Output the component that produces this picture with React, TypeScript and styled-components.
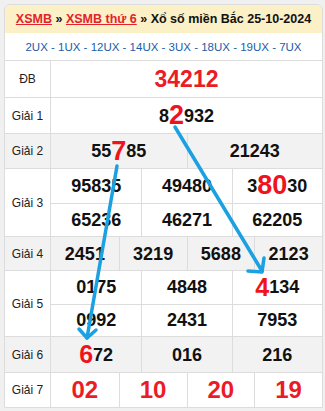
import React from "react";
import styled, { createGlobalStyle } from "styled-components";

const GlobalStyle = createGlobalStyle`
  html, body { margin: 0; padding: 0; background: #f0f0f0; }
  body { font-family: "Liberation Sans", Arial, sans-serif; }
  *, *::before, *::after { box-sizing: border-box; }
`;

const Page = styled.div`
  position: relative;
  width: 325px;
  height: 411px;
  padding: 4px 2px 0 4px;
`;

const Board = styled.div`
  border: 1px solid #dcdcdc;
  border-radius: 6px 6px 0 0;
  overflow: hidden;
  background: #fff;
`;

const Header = styled.div`
  height: 28px;
  background: #fcf0c6;
  display: flex;
  align-items: center;
  justify-content: center;
  font-weight: bold;
  font-size: 12.5px;
  color: #111;
  white-space: pre;
`;

const Crumb = styled.a`
  color: #e3232c;
  text-decoration: underline;
`;

const Links = styled.div`
  height: 27px;
  display: flex;
  align-items: center;
  justify-content: center;
  font-size: 11.5px;
  color: #1c5ca8;
  white-space: pre;
`;

const Row = styled.div<{ $shade?: boolean; $h: number }>`
  display: grid;
  grid-template-columns: 46px 1fr;
  border-top: 1px solid #dcdcdc;
  height: ${(p) => p.$h}px;
  background: ${(p) => (p.$shade ? "#f2f2f2" : "#fff")};
`;

const Label = styled.div`
  border-right: 1px solid #dcdcdc;
  display: flex;
  align-items: center;
  justify-content: center;
  font-size: 12px;
  color: #222;
`;

const Numbers = styled.div<{ $cols: number; $rows: number }>`
  display: grid;
  grid-template-columns: repeat(${(p) => p.$cols}, 1fr);
  grid-template-rows: repeat(${(p) => p.$rows}, 1fr);
`;

const Cell = styled.div<{ $left: boolean; $top: boolean; $size: number; $red?: boolean }>`
  display: flex;
  align-items: center;
  justify-content: center;
  border-left: ${(p) => (p.$left ? "1px solid #dcdcdc" : "none")};
  border-top: ${(p) => (p.$top ? "1px solid #dcdcdc" : "none")};
  font-weight: bold;
  font-size: ${(p) => p.$size}px;
  line-height: 1;
  color: ${(p) => (p.$red ? "#ec1c26" : "#111")};
`;

const Hot = styled.span<{ $size: number }>`
  color: #f0121c;
  font-size: ${(p) => p.$size}px;
`;

const Overlay = styled.svg`
  position: absolute;
  top: 0;
  left: 0;
  pointer-events: none;
`;

type Prize = {
  label: string;
  cols: number;
  nums: string[];
  h: number;
  shade?: boolean;
  size?: number;
  red?: boolean;
  hot?: number;
};

const prizes: Prize[] = [
  { label: "ĐB", cols: 1, nums: ["34212"], h: 37, size: 23, red: true },
  { label: "Giải 1", cols: 1, nums: ["8{2}932"], h: 36, hot: 27 },
  { label: "Giải 2", cols: 2, nums: ["55{7}85", "21243"], h: 35, shade: true, hot: 27 },
  {
    label: "Giải 3",
    cols: 3,
    nums: ["95835", "49480", "3{80}30", "65236", "46271", "62205"],
    h: 68,
    hot: 27,
  },
  { label: "Giải 4", cols: 4, nums: ["2451", "3219", "5688", "2123"], h: 34, shade: true },
  {
    label: "Giải 5",
    cols: 3,
    nums: ["0175", "4848", "{4}134", "0992", "2431", "7953"],
    h: 66,
    hot: 25,
  },
  { label: "Giải 6", cols: 3, nums: ["{6}72", "016", "216"], h: 36, shade: true, hot: 25 },
  { label: "Giải 7", cols: 4, nums: ["02", "10", "20", "19"], h: 35, size: 24, red: true },
];

function Num({ value, hot }: { value: string; hot: number }) {
  const parts = value.split(/(\{[^}]+\})/).filter(Boolean);
  return (
    <>
      {parts.map((p, i) =>
        p.startsWith("{") ? (
          <Hot key={i} $size={hot}>
            {p.slice(1, -1)}
          </Hot>
        ) : (
          <React.Fragment key={i}>{p}</React.Fragment>
        )
      )}
    </>
  );
}

const links = ["2UX", "1UX", "12UX", "14UX", "3UX", "18UX", "19UX", "7UX"];

export default function App() {
  return (
    <>
      <GlobalStyle />
      <Page>
        <Board>
          <Header>
            <Crumb>XSMB</Crumb>
            {" » "}
            <Crumb>XSMB thứ 6</Crumb>
            {" » Xổ số miền Bắc 25-10-2024"}
          </Header>
          <Links>{links.join(" - ")}</Links>
          {prizes.map((pr) => {
            const rows = Math.ceil(pr.nums.length / pr.cols);
            return (
              <Row key={pr.label} $h={pr.h} $shade={pr.shade}>
                <Label>{pr.label}</Label>
                <Numbers $cols={pr.cols} $rows={rows}>
                  {pr.nums.map((n, i) => (
                    <Cell
                      key={i}
                      $left={i % pr.cols !== 0}
                      $top={i >= pr.cols}
                      $size={pr.size ?? 18}
                      $red={pr.red}
                    >
                      <Num value={n} hot={pr.hot ?? 27} />
                    </Cell>
                  ))}
                </Numbers>
              </Row>
            );
          })}
        </Board>
        <Overlay width="325" height="411" viewBox="0 0 325 411">
          <g
            stroke="#1ba0e2"
            strokeWidth="3.5"
            strokeLinecap="round"
            strokeLinejoin="round"
            fill="none"
          >
            <path d="M175 127 L262 271" />
            <path d="M248 271 L262 272 L264 258" />
            <path d="M117 166 L87 338" />
            <path d="M79 329 L87 338 L96 330" />
          </g>
        </Overlay>
      </Page>
    </>
  );
}
